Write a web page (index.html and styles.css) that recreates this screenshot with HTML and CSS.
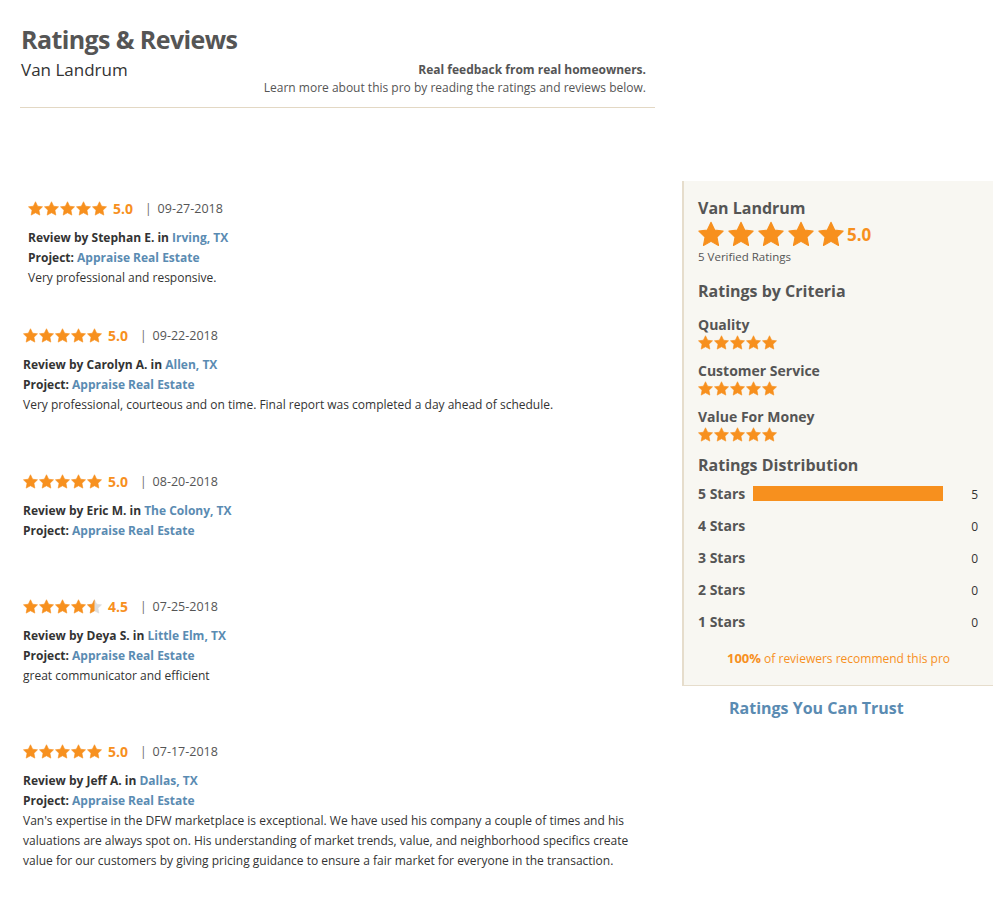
FILE: index.html
```html
<!DOCTYPE html>
<html>
<head>
<meta charset="utf-8">
<link rel="stylesheet" href="styles.css">
</head>
<body>
<svg class="defs" width="0" height="0">
  <defs>
    <path id="star" d="M12 1.2L15.41 8.31L23.22 9.35L17.52 14.79L18.94 22.55L12 18.8L5.06 22.55L6.48 14.79L0.78 9.35L8.59 8.31Z"/>
    <clipPath id="halfclip"><rect x="0" y="0" width="12" height="24"/></clipPath>
  </defs>
</svg>
<div class="page">
  <main class="main">
    <header class="head">
      <h1 class="title">Ratings &amp; Reviews</h1>
      <div class="head-row">
        <div class="pro-name">Van Landrum</div>
        <div class="head-note">
          <div class="note-strong">Real feedback from real homeowners.</div>
          <div class="note-sub">Learn more about this pro by reading the ratings and reviews below.</div>
        </div>
      </div>
    </header>

    <section class="reviews">
      <article class="review review-first">
        <div class="rate-row">
          <span class="stars"><svg viewBox="0 0 24 24"><use href="#star"/></svg><svg viewBox="0 0 24 24"><use href="#star"/></svg><svg viewBox="0 0 24 24"><use href="#star"/></svg><svg viewBox="0 0 24 24"><use href="#star"/></svg><svg viewBox="0 0 24 24"><use href="#star"/></svg></span>
          <span class="score">5.0</span><span class="sep">|</span><span class="date">09-27-2018</span>
        </div>
        <div class="line"><b>Review by Stephan E. in </b><a class="link">Irving, TX</a></div>
        <div class="line"><b>Project: </b><a class="link">Appraise Real Estate</a></div>
        <p class="text">Very professional and responsive.</p>
      </article>

      <article class="review review-second">
        <div class="rate-row">
          <span class="stars"><svg viewBox="0 0 24 24"><use href="#star"/></svg><svg viewBox="0 0 24 24"><use href="#star"/></svg><svg viewBox="0 0 24 24"><use href="#star"/></svg><svg viewBox="0 0 24 24"><use href="#star"/></svg><svg viewBox="0 0 24 24"><use href="#star"/></svg></span>
          <span class="score">5.0</span><span class="sep">|</span><span class="date">09-22-2018</span>
        </div>
        <div class="line"><b>Review by Carolyn A. in </b><a class="link">Allen, TX</a></div>
        <div class="line"><b>Project: </b><a class="link">Appraise Real Estate</a></div>
        <p class="text">Very professional, courteous and on time. Final report was completed a day ahead of schedule.</p>
      </article>

      <article class="review">
        <div class="rate-row">
          <span class="stars"><svg viewBox="0 0 24 24"><use href="#star"/></svg><svg viewBox="0 0 24 24"><use href="#star"/></svg><svg viewBox="0 0 24 24"><use href="#star"/></svg><svg viewBox="0 0 24 24"><use href="#star"/></svg><svg viewBox="0 0 24 24"><use href="#star"/></svg></span>
          <span class="score">5.0</span><span class="sep">|</span><span class="date">08-20-2018</span>
        </div>
        <div class="line"><b>Review by Eric M. in </b><a class="link">The Colony, TX</a></div>
        <div class="line"><b>Project: </b><a class="link">Appraise Real Estate</a></div>
      </article>

      <article class="review">
        <div class="rate-row">
          <span class="stars"><svg viewBox="0 0 24 24"><use href="#star"/></svg><svg viewBox="0 0 24 24"><use href="#star"/></svg><svg viewBox="0 0 24 24"><use href="#star"/></svg><svg viewBox="0 0 24 24"><use href="#star"/></svg><svg viewBox="0 0 24 24"><use class="empty" href="#star"/><use href="#star" clip-path="url(#halfclip)"/></svg></span>
          <span class="score">4.5</span><span class="sep">|</span><span class="date">07-25-2018</span>
        </div>
        <div class="line"><b>Review by Deya S. in </b><a class="link">Little Elm, TX</a></div>
        <div class="line"><b>Project: </b><a class="link">Appraise Real Estate</a></div>
        <p class="text">great communicator and efficient</p>
      </article>

      <article class="review">
        <div class="rate-row">
          <span class="stars"><svg viewBox="0 0 24 24"><use href="#star"/></svg><svg viewBox="0 0 24 24"><use href="#star"/></svg><svg viewBox="0 0 24 24"><use href="#star"/></svg><svg viewBox="0 0 24 24"><use href="#star"/></svg><svg viewBox="0 0 24 24"><use href="#star"/></svg></span>
          <span class="score">5.0</span><span class="sep">|</span><span class="date">07-17-2018</span>
        </div>
        <div class="line"><b>Review by Jeff A. in </b><a class="link">Dallas, TX</a></div>
        <div class="line"><b>Project: </b><a class="link">Appraise Real Estate</a></div>
        <p class="text">Van's expertise in the DFW marketplace is exceptional. We have used his company a couple of times and his valuations are always spot on. His understanding of market trends, value, and neighborhood specifics create value for our customers by giving pricing guidance to ensure a fair market for everyone in the transaction.</p>
      </article>
    </section>
  </main>

  <aside class="side">
    <div class="card">
      <div class="card-name">Van Landrum</div>
      <div class="big-rate">
        <span class="big-stars"><svg viewBox="0 0 24 24"><use href="#star"/></svg><svg viewBox="0 0 24 24"><use href="#star"/></svg><svg viewBox="0 0 24 24"><use href="#star"/></svg><svg viewBox="0 0 24 24"><use href="#star"/></svg><svg viewBox="0 0 24 24"><use href="#star"/></svg></span>
        <span class="big-score">5.0</span>
      </div>
      <div class="verified">5 Verified Ratings</div>

      <h2 class="card-head">Ratings by Criteria</h2>
      <div class="crit">
        <div class="crit-name">Quality</div>
        <span class="small-stars"><svg viewBox="0 0 24 24"><use href="#star"/></svg><svg viewBox="0 0 24 24"><use href="#star"/></svg><svg viewBox="0 0 24 24"><use href="#star"/></svg><svg viewBox="0 0 24 24"><use href="#star"/></svg><svg viewBox="0 0 24 24"><use href="#star"/></svg></span>
      </div>
      <div class="crit">
        <div class="crit-name">Customer Service</div>
        <span class="small-stars"><svg viewBox="0 0 24 24"><use href="#star"/></svg><svg viewBox="0 0 24 24"><use href="#star"/></svg><svg viewBox="0 0 24 24"><use href="#star"/></svg><svg viewBox="0 0 24 24"><use href="#star"/></svg><svg viewBox="0 0 24 24"><use href="#star"/></svg></span>
      </div>
      <div class="crit">
        <div class="crit-name">Value For Money</div>
        <span class="small-stars"><svg viewBox="0 0 24 24"><use href="#star"/></svg><svg viewBox="0 0 24 24"><use href="#star"/></svg><svg viewBox="0 0 24 24"><use href="#star"/></svg><svg viewBox="0 0 24 24"><use href="#star"/></svg><svg viewBox="0 0 24 24"><use href="#star"/></svg></span>
      </div>

      <h2 class="card-head dist-head">Ratings Distribution</h2>
      <div class="dist">
        <div class="dist-row"><span class="dist-label">5 Stars</span><span class="dist-track"><span class="dist-bar" style="width:100%"></span></span><span class="dist-count">5</span></div>
        <div class="dist-row"><span class="dist-label">4 Stars</span><span class="dist-track"><span class="dist-bar" style="width:0%"></span></span><span class="dist-count">0</span></div>
        <div class="dist-row"><span class="dist-label">3 Stars</span><span class="dist-track"><span class="dist-bar" style="width:0%"></span></span><span class="dist-count">0</span></div>
        <div class="dist-row"><span class="dist-label">2 Stars</span><span class="dist-track"><span class="dist-bar" style="width:0%"></span></span><span class="dist-count">0</span></div>
        <div class="dist-row"><span class="dist-label">1 Stars</span><span class="dist-track"><span class="dist-bar" style="width:0%"></span></span><span class="dist-count">0</span></div>
      </div>
      <div class="recommend"><b>100%</b> of reviewers recommend this pro</div>
    </div>
    <div class="trust">Ratings You Can Trust</div>
  </aside>
</div>
</body>
</html>
```

FILE: styles.css
```css
* { box-sizing: border-box; }
html, body { margin: 0; padding: 0; background: #fff; }
body {
  font-family: "Open Sans", "DejaVu Sans", sans-serif;
  color: #333;
  width: 1001px;
}
.defs { position: absolute; width: 0; height: 0; }
.page {
  display: flex;
  align-items: flex-start;
}
.main {
  width: 635px;
  margin-left: 20px;
}
.head {
  padding-top: 22px;
  padding-bottom: 10px;
  border-bottom: 1px solid #e3d8c4;
}
.title {
  margin: 0 0 0 1px;
  font-size: 25px;
  line-height: 35px;
  font-weight: 700;
  letter-spacing: -0.6px;
  color: #555;
}
.head-row {
  display: flex;
  justify-content: space-between;
  align-items: flex-start;
}
.pro-name {
  margin-left: 1px;
  font-size: 17px;
  line-height: 26px;
  color: #333;
}
.head-note {
  text-align: right;
  padding-right: 9px;
  padding-top: 4px;
  font-size: 12px;
  line-height: 18px;
  color: #555;
}
.note-strong { font-weight: 700; color: #555; }

.reviews {
  padding-top: 90px;
  padding-left: 3px;
}
.review {
  margin-bottom: 55px;
  font-size: 12px;
}
.review-first { padding-left: 5px; margin-bottom: 37px; }
.review-second { margin-bottom: 56px; }
.rate-row {
  display: flex;
  align-items: center;
  height: 20px;
  margin-bottom: 10px;
}
.stars { display: inline-flex; gap: 1px; }
.stars svg { width: 15px; height: 15px; fill: #f7901e; display: block; }
svg use { stroke: #f7901e; stroke-width: 1; stroke-linejoin: round; }
svg use.empty { fill: #ddd; stroke: #ddd; }
.score {
  margin-left: 6px;
  font-size: 14px;
  font-weight: 700;
  color: #f7901e;
}
.sep {
  margin-left: 12px;
  margin-right: 6px;
  color: #666;
  font-size: 12px;
}
.date {
  font-size: 12.5px;
  color: #555;
}
.line {
  line-height: 20px;
  color: #333;
}
.line b { font-weight: 700; color: #333; }
.link {
  font-weight: 700;
  color: #5a8bb2;
  text-decoration: none;
}
.text {
  margin: 0;
  line-height: 20px;
  color: #333;
}

.side {
  width: 311px;
  margin-left: 27px;
  margin-top: 181px;
}
.card {
  background: #f8f7f2;
  border-left: 2px solid #e6ddcc;
  border-bottom: 1px solid #e6ddcc;
  padding: 16px 0 17px 14px;
}
.card-name {
  font-size: 16px;
  line-height: 22px;
  font-weight: 700;
  color: #555;
}
.big-rate {
  display: flex;
  align-items: center;
  height: 26px;
  margin-top: 2px;
}
.big-stars { display: inline-flex; gap: 4px; }
.big-stars svg { width: 26px; height: 26px; fill: #f7901e; display: block; }
.big-score {
  margin-left: 3px;
  font-size: 17px;
  font-weight: 700;
  color: #f7901e;
}
.verified {
  margin-top: 2px;
  font-size: 11.5px;
  line-height: 16px;
  color: #555;
}
.card-head {
  margin: 15px 0 0 0;
  font-size: 16px;
  line-height: 22px;
  font-weight: 700;
  color: #555;
}
.crit { margin-top: 14px; }
.crit + .crit { margin-top: 12px; }
.crit-name {
  font-size: 14px;
  line-height: 18px;
  font-weight: 700;
  color: #555;
}
.small-stars { display: flex; gap: 1px; margin-top: 1px; }
.small-stars svg { width: 15px; height: 15px; fill: #f7901e; display: block; }
.crit:last-of-type { margin-top: 13px; }
.dist-head { margin-top: 12px; }
.dist { margin-top: 1px; padding-right: 15px; }
.dist-row {
  display: grid;
  grid-template-columns: 55px 190px 1fr;
  align-items: center;
  height: 32px;
}
.dist-label {
  font-size: 14px;
  font-weight: 700;
  color: #555;
}
.dist-track { display: block; height: 15px; }
.dist-bar { display: block; height: 15px; background: #f7901e; }
.dist-count {
  text-align: right;
  font-size: 12px;
  color: #333;
  padding-top: 2px;
}
.recommend {
  margin-top: 12px;
  text-align: center;
  font-size: 12px;
  line-height: 18px;
  color: #f7901e;
  padding-right: 14px;
}
.recommend b { font-size: 13px; }
.trust {
  margin-top: 11px;
  margin-left: 47px;
  font-size: 16px;
  line-height: 22px;
  font-weight: 700;
  color: #5a8bb2;
}
```
